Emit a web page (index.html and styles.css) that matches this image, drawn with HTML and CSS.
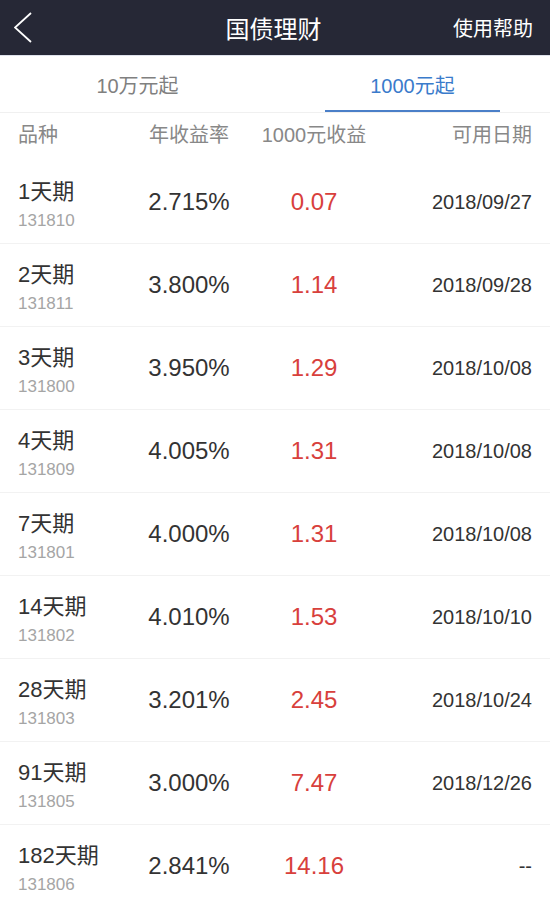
FILE: index.html
```html
<!DOCTYPE html>
<html lang="zh-CN">
<head>
  <meta charset="UTF-8" />
  <meta name="viewport" content="width=device-width, initial-scale=1.0" />
  <title>国债理财</title>
  <link rel="stylesheet" href="styles.css">
</head>
<body>
  <header class="nav">
    <a class="nav-back" href="#">
      <svg width="20" height="32" viewBox="0 0 20 32"><polyline points="17,1 1,15.5 17,30" fill="none" stroke="#fff" stroke-width="1.8" stroke-linejoin="miter"/></svg>
    </a>
    <h1 class="nav-title">国债理财</h1>
    <a class="nav-help" href="#">使用帮助</a>
  </header>

  <div class="tabs">
    <div class="tab">10万元起</div>
    <div class="tab active">1000元起</div>
  </div>

  <div class="list">
    <div class="row head">
      <div>品种</div>
      <div class="c">年收益率</div>
      <div class="c">1000元收益</div>
      <div class="r">可用日期</div>
    </div>

    <div class="row">
      <div class="name"><div class="term">1天期</div><div class="code">131810</div></div>
      <div class="c rate">2.715%</div>
      <div class="c gain">0.07</div>
      <div class="r date">2018/09/27</div>
    </div>
    <div class="row">
      <div class="name"><div class="term">2天期</div><div class="code">131811</div></div>
      <div class="c rate">3.800%</div>
      <div class="c gain">1.14</div>
      <div class="r date">2018/09/28</div>
    </div>
    <div class="row">
      <div class="name"><div class="term">3天期</div><div class="code">131800</div></div>
      <div class="c rate">3.950%</div>
      <div class="c gain">1.29</div>
      <div class="r date">2018/10/08</div>
    </div>
    <div class="row">
      <div class="name"><div class="term">4天期</div><div class="code">131809</div></div>
      <div class="c rate">4.005%</div>
      <div class="c gain">1.31</div>
      <div class="r date">2018/10/08</div>
    </div>
    <div class="row">
      <div class="name"><div class="term">7天期</div><div class="code">131801</div></div>
      <div class="c rate">4.000%</div>
      <div class="c gain">1.31</div>
      <div class="r date">2018/10/08</div>
    </div>
    <div class="row">
      <div class="name"><div class="term">14天期</div><div class="code">131802</div></div>
      <div class="c rate">4.010%</div>
      <div class="c gain">1.53</div>
      <div class="r date">2018/10/10</div>
    </div>
    <div class="row">
      <div class="name"><div class="term">28天期</div><div class="code">131803</div></div>
      <div class="c rate">3.201%</div>
      <div class="c gain">2.45</div>
      <div class="r date">2018/10/24</div>
    </div>
    <div class="row">
      <div class="name"><div class="term">91天期</div><div class="code">131805</div></div>
      <div class="c rate">3.000%</div>
      <div class="c gain">7.47</div>
      <div class="r date">2018/12/26</div>
    </div>
    <div class="row">
      <div class="name"><div class="term">182天期</div><div class="code">131806</div></div>
      <div class="c rate">2.841%</div>
      <div class="c gain">14.16</div>
      <div class="r date">--</div>
    </div>
  </div>
</body>
</html>
```

FILE: styles.css
```css
body {
  margin: 0;
  font-family: 'Liberation Sans', 'Noto Sans CJK SC', sans-serif;
  color: #333;
  background: #fff;
  overflow: hidden;
}
.nav {
  display: grid;
  grid-template-columns: 1fr auto 1fr;
  align-items: center;
  height: 55px;
  padding: 0 17px 0 14px;
  background-color: #262836;
  border-bottom: 1px solid #dfe2ec;
}
.nav-back {
  display: flex;
  align-items: center;
  padding-top: 1px;
}
.nav-title {
  margin: 0;
  font-size: 24px;
  font-weight: normal;
  color: #fff;
}
.nav-help {
  justify-self: end;
  font-size: 20px;
  color: #fff;
  text-decoration: none;
}
.tabs {
  display: grid;
  grid-template-columns: 1fr 1fr;
  height: 56px;
  border-bottom: 1px solid #f0f0f0;
}
.tab {
  display: flex;
  flex-direction: column;
  align-items: center;
  padding-top: 18px;
  font-size: 20px;
  line-height: 24px;
  color: #808080;
}
.tab.active {
  color: #3a7bcb;
}
.tab.active::after {
  content: "";
  width: 175px;
  height: 2px;
  margin-top: auto;
  background-color: #4a7fc8;
}
.row {
  display: grid;
  grid-template-columns: 100px 142px 108px 1fr;
  align-items: center;
  height: 82px;
  padding: 0 18px;
  border-bottom: 1px solid #f2f2f2;
}
.row.head {
  align-items: start;
  height: 38px;
  padding-top: 10px;
  border-bottom: none;
  font-size: 20px;
  line-height: 24px;
  color: #888;
}
.c {
  text-align: center;
}
.r {
  text-align: right;
}
.name {
  padding-top: 6px;
}
.term {
  font-size: 22px;
  line-height: 32px;
  white-space: nowrap;
}
.code {
  font-size: 17px;
  line-height: 26px;
  color: #a5a5a5;
}
.rate {
  font-size: 24px;
}
.gain {
  font-size: 24px;
  color: #d8403c;
}
.date {
  font-size: 20px;
}
```
